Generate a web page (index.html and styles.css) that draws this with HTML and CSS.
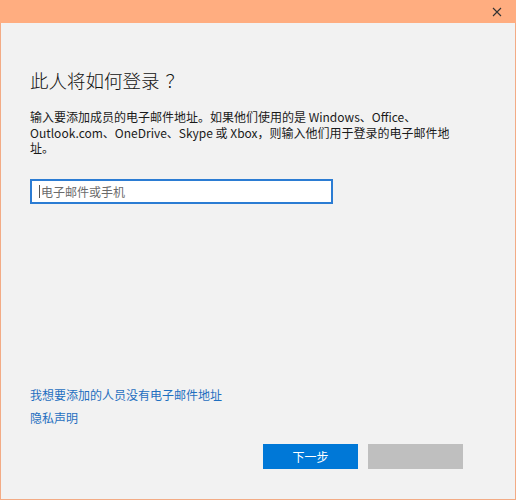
FILE: index.html
```html
<!DOCTYPE html>
<html lang="zh-CN">
<head>
<meta charset="utf-8">
<title>此人将如何登录？</title>
<link rel="stylesheet" href="styles.css">
</head>
<body>
<div class="window">
  <div class="titlebar">
    <div class="close" aria-label="关闭">
      <svg width="10" height="10" viewBox="0 0 10 10"><path d="M1 1 L9 9 M9 1 L1 9" stroke="#333" stroke-width="1.1" fill="none"/></svg>
    </div>
  </div>
  <div class="content">
    <h1 class="heading">此人将如何登录<span class="q">？</span></h1>
    <p class="desc">输入要添加成员的电子邮件地址。如果他们使用的是 Windows、Office、Outlook.com、OneDrive、Skype 或 Xbox，则输入他们用于登录的电子邮件地址。</p>
    <div class="field"><span class="caret"></span><span class="placeholder">电子邮件或手机</span></div>
    <div class="links">
      <a class="link">我想要添加的人员没有电子邮件地址</a>
      <a class="link">隐私声明</a>
    </div>
  </div>
  <div class="footer">
    <button class="btn primary">下一步</button>
    <button class="btn disabled"></button>
  </div>
</div>
</body>
</html>
```
FILE: styles.css
```css
html, body {
  margin: 0;
  padding: 0;
  background: #f2f2f2;
}
body {
  font-family: "Noto Sans CJK SC", "Noto Sans", sans-serif;
  color: #000;
}
.window {
  box-sizing: border-box;
  width: 516px;
  height: 500px;
  border: 1px solid #f3ab85;
  border-top: none;
  background: #f2f2f2;
  display: flex;
  flex-direction: column;
}
.titlebar {
  height: 23px;
  background: #ffad80;
  display: flex;
  justify-content: flex-end;
  align-items: center;
  margin: 0 -1px;
}
.close {
  width: 38px;
  height: 23px;
  display: flex;
  align-items: center;
  justify-content: center;
}
.content {
  flex: 1;
  display: flex;
  flex-direction: column;
  padding: 0 40px 0 29px;
}
.heading {
  margin: 45px 0 0 0;
  font-size: 18.5px;
  line-height: 24px;
  font-weight: 300;
  color: #111;
}
.q {
  margin-left: 6px;
}
.desc {
  margin: 17px 0 0 0;
  font-size: 12px;
  line-height: 15.5px;
  color: #1a1a1a;
  width: 430px;
}
.field {
  box-sizing: border-box;
  margin-top: 23px;
  width: 303px;
  height: 25px;
  border: 2px solid #2b7cd3;
  background: #fff;
  display: flex;
  align-items: center;
  padding-left: 7px;
}
.caret {
  width: 1px;
  height: 13px;
  background: #555;
  margin-right: 1px;
}
.placeholder {
  font-size: 12px;
  color: #6b6b6b;
}
.links {
  margin-top: auto;
  display: flex;
  flex-direction: column;
  gap: 7px;
}
.link {
  font-size: 12px;
  line-height: 16px;
  color: #1f6fc0;
}
.footer {
  display: flex;
  justify-content: flex-end;
  gap: 10px;
  padding: 18px 52px 30px 0;
}
.btn {
  width: 95px;
  height: 25px;
  border: none;
  padding: 0;
  font-family: inherit;
  font-size: 12px;
}
.primary {
  background: #0078d7;
  color: #fff;
}
.disabled {
  background: #bfbfbf;
}
```
